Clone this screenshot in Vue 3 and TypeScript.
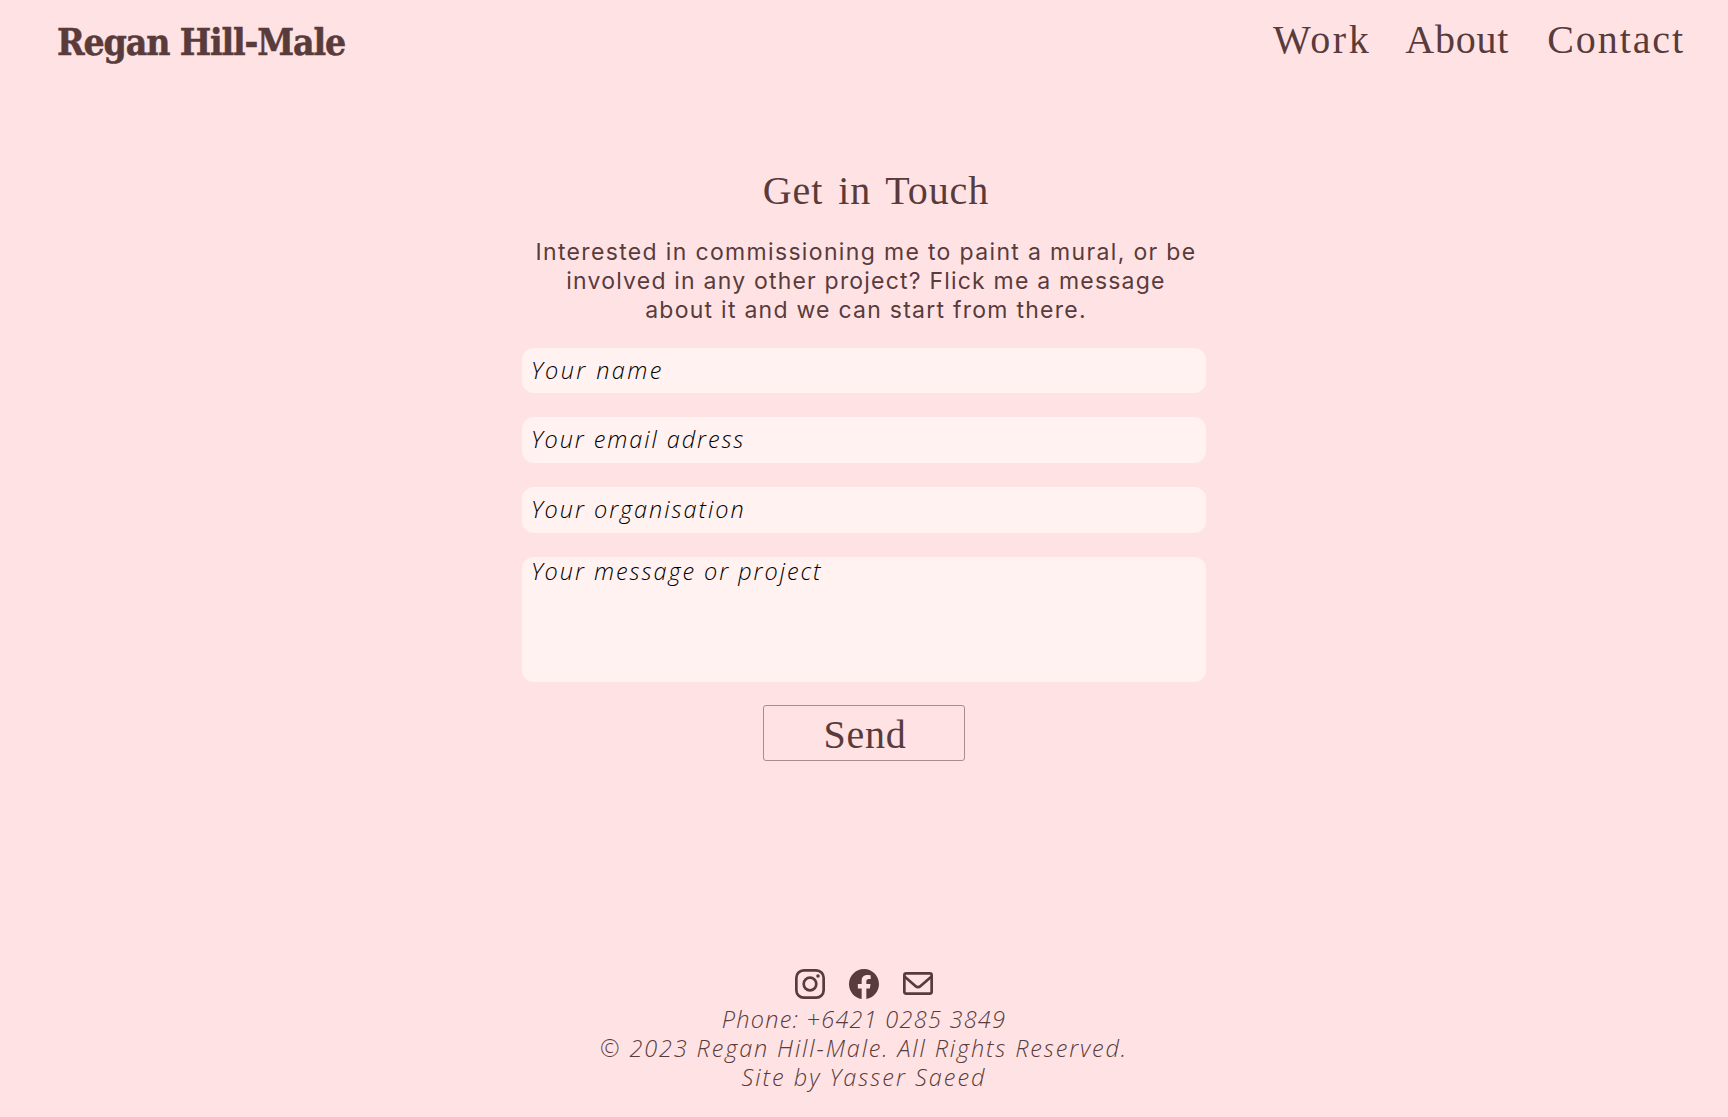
<script setup lang="ts">
interface Line {
  text: string
  spacing: string
}

const navLinks: Line[] = [
  { text: 'Work', spacing: '2.6px' },
  { text: 'About', spacing: '0.8px' },
  { text: 'Contact', spacing: '1.9px' },
]

const intro: Line[] = [
  { text: 'Interested in commissioning me to paint a mural, or be', spacing: '1.34px' },
  { text: 'involved in any other project? Flick me a message', spacing: '1.2px' },
  { text: 'about it and we can start from there.', spacing: '1.25px' },
]

const fields: Line[] = [
  { text: 'Your name', spacing: '2.4px' },
  { text: 'Your email adress', spacing: '1.92px' },
  { text: 'Your organisation', spacing: '1.96px' },
]

const message: Line = { text: 'Your message or project', spacing: '1.95px' }

const credits: Line[] = [
  { text: 'Phone: +6421 0285 3849', spacing: '1.26px' },
  { text: '© 2023 Regan Hill-Male. All Rights Reserved.', spacing: '1.86px' },
  { text: 'Site by Yasser Saeed', spacing: '2.02px' },
]
</script>

<template>
  <div class="page">
    <header class="header">
      <a class="logo">Regan Hill-Male</a>
      <nav class="nav">
        <a v-for="link in navLinks" :key="link.text" :style="{ letterSpacing: link.spacing }">{{ link.text }}</a>
      </nav>
    </header>

    <main class="contact">
      <h1 class="title">Get in Touch</h1>
      <p class="intro">
        <span v-for="line in intro" :key="line.text" class="line" :style="{ letterSpacing: line.spacing }">{{ line.text }}</span>
      </p>
      <form class="form">
        <label v-for="field in fields" :key="field.text" class="field" :style="{ letterSpacing: field.spacing }">{{ field.text }}</label>
        <label class="field message" :style="{ letterSpacing: message.spacing }">{{ message.text }}</label>
        <button class="send" type="button">Send</button>
      </form>
    </main>

    <footer class="footer">
      <div class="icons">
        <svg viewBox="0 0 30 30" width="30" height="30" fill="none" stroke="currentColor" stroke-width="2.7">
          <rect x="1.35" y="1.35" width="27.3" height="27.3" rx="7.4" />
          <circle cx="15" cy="15" r="6.3" />
          <circle cx="23" cy="7" r="1.8" fill="currentColor" stroke="none" />
        </svg>
        <svg viewBox="0 0 16 16" width="30" height="30" fill="currentColor">
          <path d="M16 8.049c0-4.446-3.582-8.05-8-8.05C3.58 0-.002 3.603-.002 8.05c0 4.017 2.926 7.347 6.75 7.951v-5.625h-2.03V8.05H6.75V6.275c0-2.017 1.195-3.131 3.022-3.131.876 0 1.791.157 1.791.157v1.98h-1.009c-.993 0-1.303.621-1.303 1.258v1.51h2.218l-.354 2.326H9.25V16c3.824-.604 6.75-3.934 6.75-7.951" />
        </svg>
        <svg viewBox="0 0 30 30" width="30" height="30" fill="none" stroke="currentColor" stroke-width="2.7">
          <rect x="1.35" y="4.35" width="27.3" height="20.3" rx="1.8" />
          <path d="M1.5 7.6 12.4 17Q15 19.4 17.6 17L28.5 7.6" />
        </svg>
      </div>
      <p v-for="line in credits" :key="line.text" class="line" :style="{ letterSpacing: line.spacing }">{{ line.text }}</p>
    </footer>
  </div>
</template>

<style>
body {
  background: #ffe3e4;
}
</style>

<style scoped>
.page {
  display: flex;
  flex-direction: column;
  box-sizing: border-box;
  height: 1117px;
  overflow: hidden;
  background: #ffe3e4;
  color: #593b3c;
  white-space: nowrap;
}

.header {
  display: flex;
  justify-content: space-between;
  height: 60px;
  padding: 10px 43px 0 57px;
  line-height: 60px;
}

.logo {
  margin-top: 2px;
  font-family: "DejaVu Serif Condensed", "DejaVu Serif", serif;
  font-stretch: condensed;
  font-weight: 700;
  font-size: 37px;
  letter-spacing: -1.13px;
  -webkit-text-stroke: 0.5px currentColor;
}

.nav {
  display: flex;
  gap: 34px;
  font-family: "Liberation Serif", serif;
  font-size: 40px;
}

.nav a:last-child {
  margin-left: 4px;
}

.contact {
  display: flex;
  flex-direction: column;
  align-items: center;
  padding-top: 97px;
}

.title {
  height: 48px;
  margin: 0 0 23px;
  padding-left: 24px;
  font: 400 40px/48px "Liberation Serif", serif;
  letter-spacing: 0.9px;
  word-spacing: 4px;
}

.intro {
  margin: 0 0 23px;
  padding-left: 4px;
  font: 400 23px/29px Inter, sans-serif;
  text-align: center;
}

.line {
  display: block;
  height: 29px;
  margin: 0;
}

.form {
  display: flex;
  flex-direction: column;
  align-items: center;
}

.field {
  box-sizing: border-box;
  width: 684px;
  height: 46px;
  margin-bottom: 24px;
  padding-left: 9px;
  border-radius: 12px;
  background: #fff2f1;
  color: #000;
  font: italic 300 23.5px/45px "Open Sans", sans-serif;
}

.field:first-child {
  height: 45px;
}

.message {
  height: 125px;
  margin-bottom: 23px;
  line-height: 29px;
}

.send {
  box-sizing: border-box;
  width: 202px;
  height: 56px;
  padding: 4px 0 0 2px;
  border: 1px solid #ab8b8c;
  border-radius: 3px;
  background: none;
  color: inherit;
  font: 400 40px/50px "Liberation Serif", serif;
  letter-spacing: 0.8px;
}

.footer {
  height: 148px;
  margin-top: auto;
  font: italic 300 23.5px/29px "Open Sans", sans-serif;
  text-align: center;
}

.icons {
  display: flex;
  justify-content: center;
  gap: 24px;
  height: 30px;
  margin-bottom: 6px;
}
</style>
